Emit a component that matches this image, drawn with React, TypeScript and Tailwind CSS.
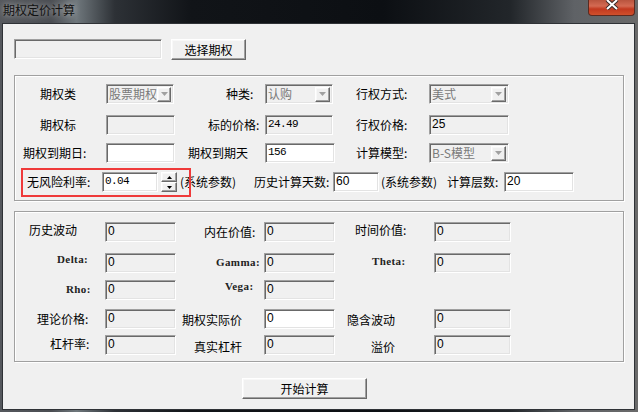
// Option pricing calculator dialog (Win7 classic-style window)

const sunken =
  "border border-t-[#a0a0a0] border-l-[#a0a0a0] border-r-white border-b-white shadow-[inset_1px_1px_0_#696969,inset_-1px_-1px_0_#e3e3e3]";
const raised =
  "border border-t-white border-l-white border-r-[#696969] border-b-[#696969] shadow-[inset_-1px_-1px_0_#a0a0a0,inset_1px_1px_0_#f8f8f8]";
const etched = "border border-[#a0a0a0] shadow-[inset_1px_1px_0_#fff,1px_1px_0_#fff]";
const mono = "font-['Liberation_Mono',monospace] text-[11px] tracking-[-0.6px]";
const sans = "font-['Liberation_Sans',Arial,sans-serif] text-[12px]";

function Lbl({ children, className = "" }: { children: React.ReactNode; className?: string }) {
  return <span className={`whitespace-nowrap text-[12px] leading-[12px] text-black ${className}`}>{children}</span>;
}

function Greek({ children }: { children: React.ReactNode }) {
  return (
    <span className="whitespace-nowrap font-['Liberation_Serif',serif] text-[11px] font-bold leading-[12px] tracking-[0.4px] text-[#222]">
      {children}
    </span>
  );
}

function Cell({ className = "", children }: { className?: string; children?: React.ReactNode }) {
  return <div className={`flex shrink-0 leading-[12px] ${className}`}>{children}</div>;
}

function Field({
  className = "",
  value = "",
  white = false,
  font = sans,
}: {
  className?: string;
  value?: string;
  white?: boolean;
  font?: string;
}) {
  return (
    <div
      className={`${sunken} h-[20px] shrink-0 pl-[2px] pt-[2px] leading-[13px] text-black ${
        white ? "bg-white" : "bg-[#f0f0f0]"
      } ${font} ${className}`}
    >
      {value}
    </div>
  );
}

function Combo({ className = "", value }: { className?: string; value: string }) {
  return (
    <div className={`${sunken} flex h-[20px] shrink-0 items-center justify-between bg-[#f0f0f0] pl-[2px] pr-[2px] ${className}`}>
      <span className="whitespace-nowrap text-[12px] leading-[12px] text-[#7a7a7a]">{value}</span>
      <div className={`${raised} flex h-[15px] w-[15px] items-center justify-center bg-[#f0f0f0]`}>
        <svg width="7" height="4" viewBox="0 0 7 4">
          <path d="M0 0h7L3.5 4z" fill="#a0a0a0" />
        </svg>
      </div>
    </div>
  );
}

function Spin() {
  return (
    <div className="flex h-[20px] w-[16px] shrink-0 flex-col">
      <div className={`${raised} flex h-[10px] items-center justify-center bg-[#f0f0f0]`}>
        <svg width="5" height="3" viewBox="0 0 5 3">
          <path d="M2.5 0L5 3H0z" fill="#000" />
        </svg>
      </div>
      <div className={`${raised} flex h-[10px] items-center justify-center bg-[#f0f0f0]`}>
        <svg width="5" height="3" viewBox="0 0 5 3">
          <path d="M0 0h5L2.5 3z" fill="#000" />
        </svg>
      </div>
    </div>
  );
}

function Button({ className = "", label }: { className?: string; label: string }) {
  return (
    <div className={`${raised} flex shrink-0 items-center justify-center bg-[#f0f0f0] ${className}`}>
      <Lbl>{label}</Lbl>
    </div>
  );
}

export default function App() {
  return (
    <div className="flex h-[412px] w-[638px] flex-col overflow-hidden bg-[linear-gradient(90deg,#55585d_0%,#4a4d52_8%,#6f777c_12%,#2d3136_18%,#111418_30%,#0c0f13_60%,#22262a_80%,#5f6266_90%,#6a6a6a_100%)] font-['Noto_Sans_CJK_SC',sans-serif]">
      {/* title bar */}
      <div className="flex h-[23px] shrink-0 items-start justify-between">
        <span className="pl-[3px] pt-[3px] text-[12px] leading-[13px] text-[#111] [text-shadow:0_0_6px_#d0d0d0]">
          期权定价计算
        </span>
        <div className="mr-[3px] flex h-[16px] w-[47px] items-start justify-center rounded-b-[4px] border border-t-0 border-[#5b2a20] bg-[linear-gradient(180deg,#b8543e_0%,#d46a52_40%,#c2391f_60%,#d0502c_100%)]">
          <svg width="14" height="10" viewBox="0 0 14 10">
            <path d="M2 0L12 9M12 0L2 9" stroke="#3a2a28" strokeWidth="4" />
            <path d="M2 0L12 9M12 0L2 9" stroke="#fff" strokeWidth="2" />
          </svg>
        </div>
      </div>

      {/* client area */}
      <div className="ml-[2px] flex h-[387px] w-[633px] flex-col border border-[#2f3236] bg-[#f0f0f0] pl-[11px] pt-[15px]">
        <div className="flex h-[21px] items-start">
          <Field className="w-[148px]" />
          <Button className="ml-[9px] h-[21px] w-[75px]" label="选择期权" />
        </div>

        {/* parameters */}
        <div className={`${etched} relative mt-[15px] h-[126px] w-[610px] pt-[8px]`}>
          <div className="absolute left-[6px] top-[92px] z-10 h-[29px] w-[170px] border-2 border-[#ef3a3a]" />
          <div className="flex h-[20px] items-center">
            <Cell className="w-[91px] pl-[25px]"><Lbl>期权类</Lbl></Cell>
            <Combo className="w-[68px]" value="股票期权" />
            <Cell className="w-[91px] pl-[52px]"><Lbl>种类:</Lbl></Cell>
            <Combo className="w-[68px]" value="认购" />
            <Cell className="w-[96px] pl-[23px]"><Lbl>行权方式:</Lbl></Cell>
            <Combo className="w-[80px]" value="美式" />
          </div>
          <div className="mt-[11px] flex h-[20px] items-center">
            <Cell className="w-[91px] pl-[25px]"><Lbl>期权标</Lbl></Cell>
            <Field className="w-[69px]" />
            <Cell className="w-[90px] pl-[33px]"><Lbl>标的价格:</Lbl></Cell>
            <Field className="w-[68px]" value="24.49" font={mono} />
            <Cell className="w-[96px] pl-[23px]"><Lbl>行权价格:</Lbl></Cell>
            <Field className="w-[80px]" value="25" />
          </div>
          <div className="mt-[8px] flex h-[20px] items-center">
            <Cell className="w-[91px] pl-[8px]"><Lbl>期权到期日:</Lbl></Cell>
            <Field className="w-[69px]" white />
            <Cell className="w-[90px] pl-[13px]"><Lbl>期权到期天</Lbl></Cell>
            <Field className="w-[70px]" value="156" white font={mono} />
            <Cell className="w-[94px] pl-[21px]"><Lbl>计算模型:</Lbl></Cell>
            <Combo className="w-[80px]" value="B-S模型" />
          </div>
          <div className="mt-[9px] flex h-[20px] items-center">
            <Cell className="w-[87px] pl-[12px]"><Lbl>无风险利率:</Lbl></Cell>
            <Field className="w-[56px]" value="0.04" white font={mono} />
            <Cell className="ml-[3px]"><Spin /></Cell>
            <Cell className="ml-[3px] w-[74px]"><Lbl>(系统参数)</Lbl></Cell>
            <Cell className="w-[79px]"><Lbl>历史计算天数:</Lbl></Cell>
            <Field className="w-[46px]" value="60" white />
            <Cell className="ml-[2px] w-[66px]"><Lbl>(系统参数)</Lbl></Cell>
            <Cell className="w-[57px]"><Lbl>计算层数:</Lbl></Cell>
            <Field className="w-[70px]" value="20" white />
          </div>
        </div>

        {/* results */}
        <div className={`${etched} mt-[10px] h-[151px] w-[610px] pt-[10px]`}>
          <div className="flex h-[20px] items-center">
            <Cell className="w-[90px] pl-[14px]"><Lbl className="relative -top-[2px]">历史波动</Lbl></Cell>
            <Field className="w-[71px]" value="0" />
            <Cell className="w-[88px] pl-[28px]"><Lbl>内在价值:</Lbl></Cell>
            <Field className="w-[71px]" value="0" />
            <Cell className="w-[99px] pl-[20px]"><Lbl className="relative -top-[2px]">时间价值:</Lbl></Cell>
            <Field className="w-[77px]" value="0" />
          </div>
          <div className="mt-[11px] flex h-[20px] items-center">
            <Cell className="w-[90px] self-start pl-[42px] pt-[0px]"><Greek>Delta:</Greek></Cell>
            <Field className="w-[71px]" value="0" />
            <Cell className="w-[88px] self-start pl-[40px] pt-[3px]"><Greek>Gamma:</Greek></Cell>
            <Field className="w-[71px]" value="0" />
            <Cell className="w-[99px] self-start pl-[37px] pt-[2px]"><Greek>Theta:</Greek></Cell>
            <Field className="w-[77px]" value="0" />
          </div>
          <div className="mt-[7px] flex h-[20px] items-center">
            <Cell className="w-[90px] self-start pl-[51px] pt-[3px]"><Greek>Rho:</Greek></Cell>
            <Field className="w-[71px]" value="0" />
            <Cell className="w-[88px] self-start pl-[49px] pt-[0px]"><Greek>Vega:</Greek></Cell>
            <Field className="w-[71px]" value="0" />
          </div>
          <div className="mt-[9px] flex h-[20px] items-center">
            <Cell className="w-[90px] pl-[22px]"><Lbl>理论价格:</Lbl></Cell>
            <Field className="w-[71px]" value="0" />
            <Cell className="w-[88px] pl-[6px]"><Lbl className="relative top-[1px]">期权实际价</Lbl></Cell>
            <Field className="w-[71px]" value="0" white />
            <Cell className="w-[99px] pl-[12px]"><Lbl className="relative top-[1px]">隐含波动</Lbl></Cell>
            <Field className="w-[77px]" value="0" />
          </div>
          <div className="mt-[6px] flex h-[20px] items-center">
            <Cell className="w-[90px] pl-[35px]"><Lbl className="relative -top-[1px]">杠杆率:</Lbl></Cell>
            <Field className="w-[71px]" value="0" />
            <Cell className="w-[88px] pl-[18px]"><Lbl className="relative top-[2px]">真实杠杆</Lbl></Cell>
            <Field className="w-[71px]" value="0" />
            <Cell className="w-[99px] pl-[36px]"><Lbl className="relative top-[2px]">溢价</Lbl></Cell>
            <Field className="w-[77px]" value="0" />
          </div>
        </div>

        <Button className="ml-[228px] mt-[16px] h-[21px] w-[125px]" label="开始计算" />
      </div>
    </div>
  );
}
